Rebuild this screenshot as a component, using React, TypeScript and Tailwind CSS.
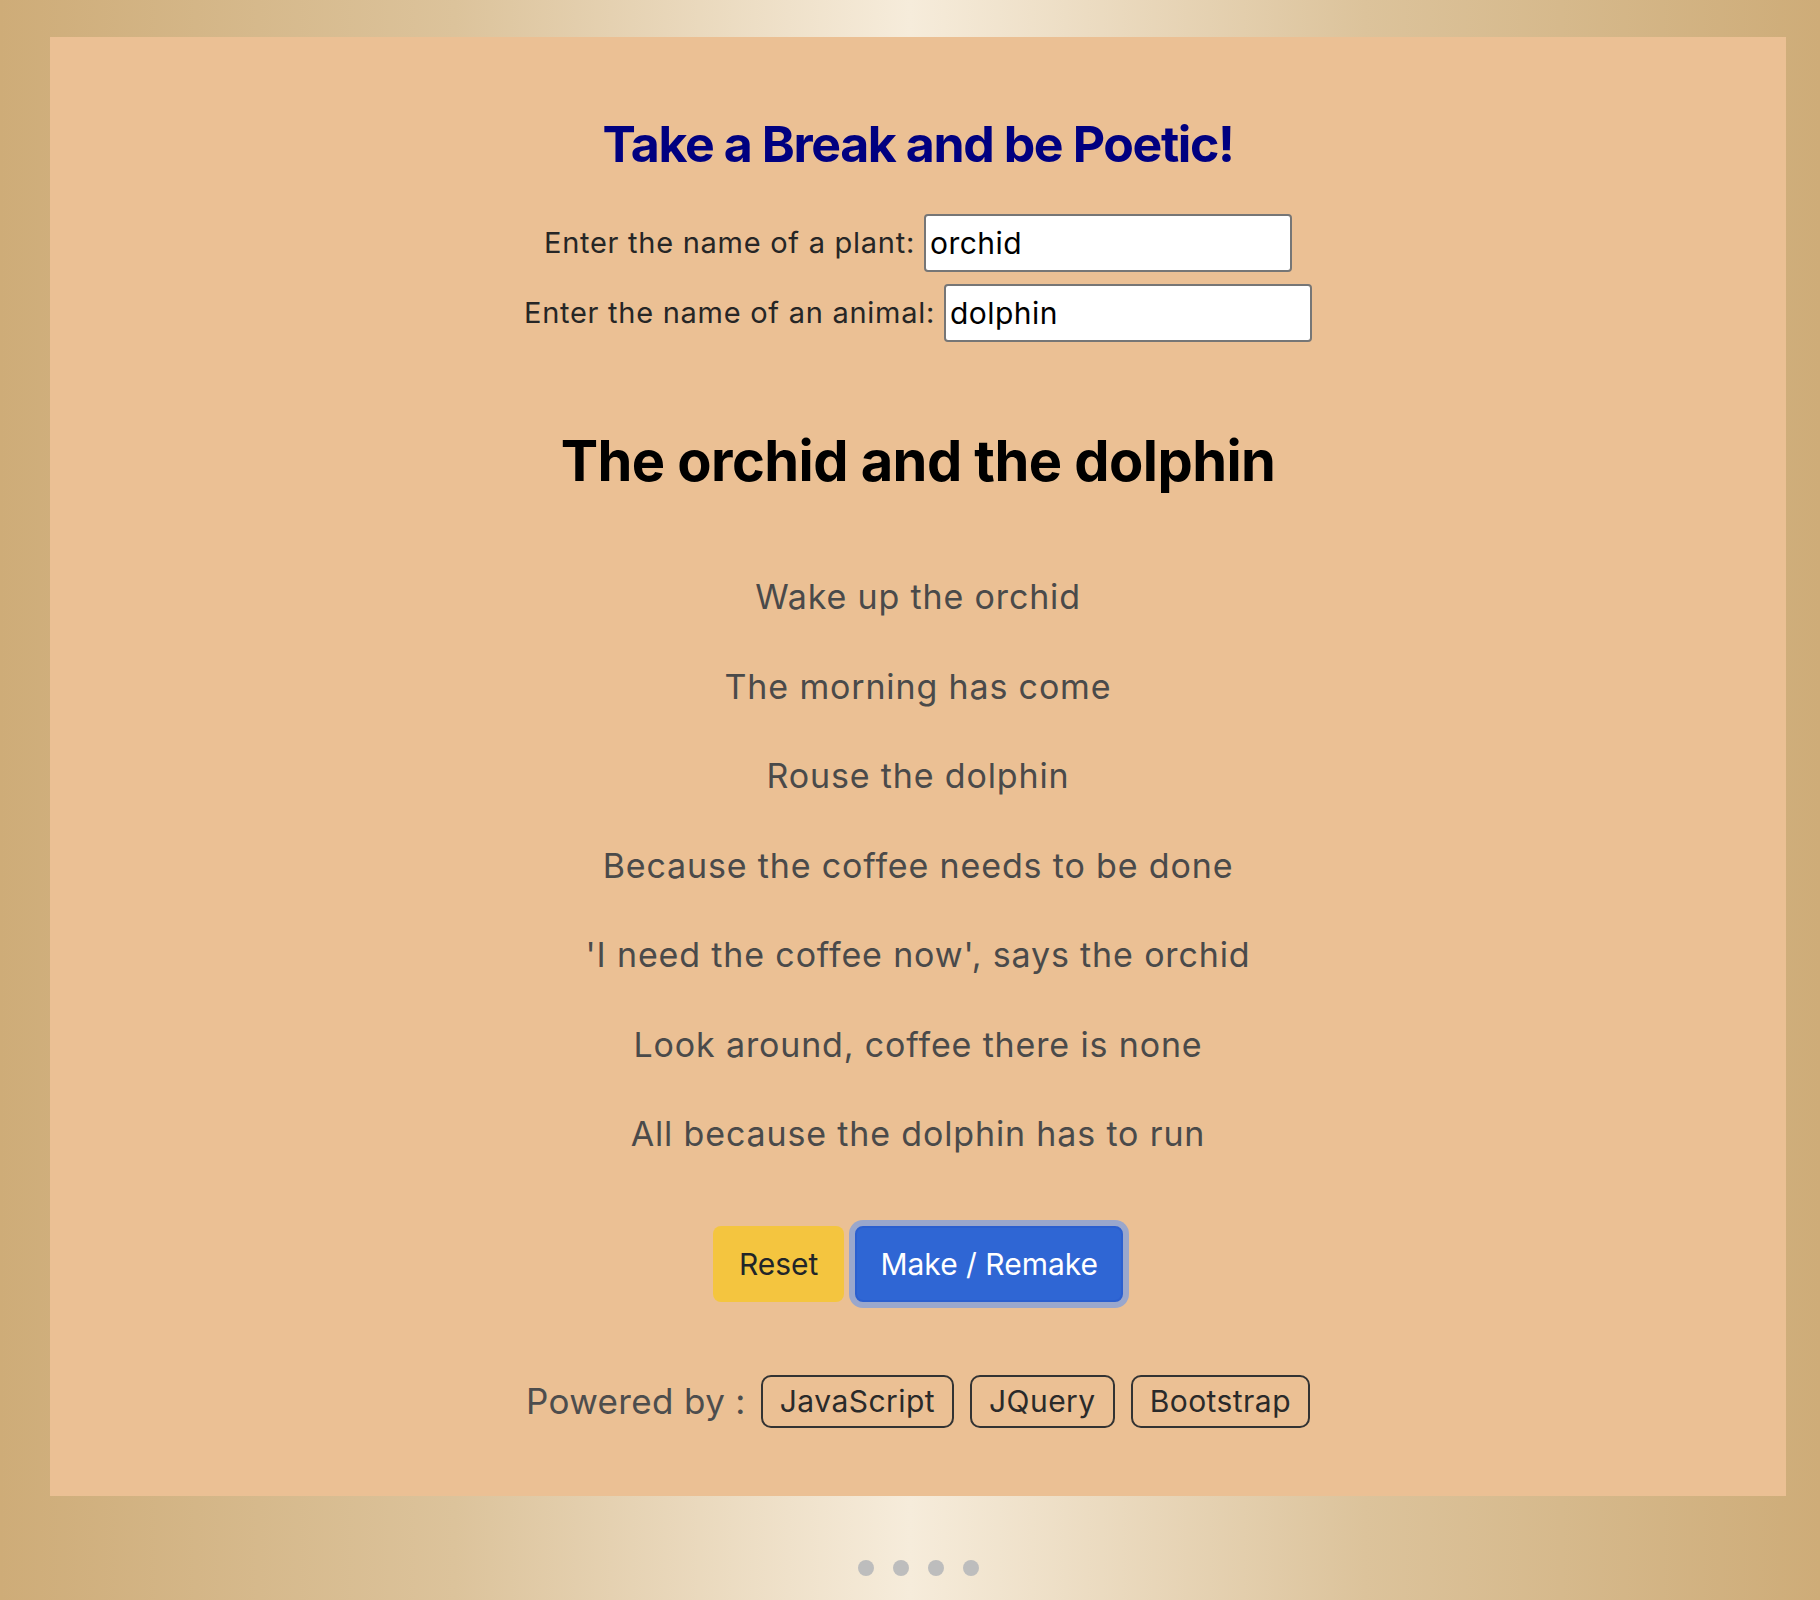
import React from "react";

const poem = [
  "Wake up the orchid",
  "The morning has come",
  "Rouse the dolphin",
  "Because the coffee needs to be done",
  "'I need the coffee now', says the orchid",
  "Look around, coffee there is none",
  "All because the dolphin has to run",
];

export default function App() {
  return (
    <div
      className="min-h-[1600px] w-full bg-[linear-gradient(to_right,#ceac78_0%,#dcc39b_25%,#f6ecdb_50%,#dcc39b_75%,#ceac78_100%)] pt-[37px]"
      style={{ fontFamily: "Inter, 'Noto Sans', sans-serif" }}
    >
      <div className="ml-[50px] w-[1736px]">
        <div className="flex h-[1459px] flex-col items-center bg-[#ebc094] pt-[77px]">
          <h1 className="text-[50px] font-bold leading-[60px] tracking-[-0.028em] text-[#000080]">
            Take a Break and be Poetic!
          </h1>

          <div className="mt-[40px] flex flex-col items-center gap-[12px]">
            <div className="flex items-center gap-[9px]">
              <label className="text-[29px] leading-[34px] tracking-[0.025em] text-[#262626]">Enter the name of a plant:</label>
              <input
                readOnly
                value="orchid"
                className="h-[58px] w-[368px] rounded-[4px] border-2 border-[#767676] bg-white pl-[4px] text-[30px] tracking-[0.015em] text-black outline-none"
              />
            </div>
            <div className="flex items-center gap-[9px]">
              <label className="text-[29px] leading-[34px] tracking-[0.025em] text-[#262626]">Enter the name of an animal:</label>
              <input
                readOnly
                value="dolphin"
                className="h-[58px] w-[368px] rounded-[4px] border-2 border-[#767676] bg-white pl-[4px] text-[30px] tracking-[0.015em] text-black outline-none"
              />
            </div>
          </div>

          <h2 className="mt-[86px] text-[56px] font-bold leading-[67px] tracking-[-0.01em] text-black">
            The orchid and the dolphin
          </h2>

          <div className="mt-[82px] flex flex-col items-center gap-[49.5px]">
            {poem.map((l) => (
              <p key={l} className="text-[34px] leading-[40px] tracking-[0.025em] text-[#4a4a4a]">
                {l}
              </p>
            ))}
          </div>

          <div className="mt-[72px] flex items-center gap-[11px]">
            <button className="h-[76px] rounded-[8px] bg-[#f4c53f] px-[26px] text-[30px] text-[#212529]">
              Reset
            </button>
            <button className="h-[76px] rounded-[8px] border-2 border-[#2b5fcf] bg-[#2f66d4] px-[23px] text-[30px] text-white ring-[6px] ring-[#9aa7cc]">
              Make / Remake
            </button>
          </div>

          <div className="mt-[73px] flex items-center">
            <span className="mr-[15px] text-[35px] tracking-[0.01em] text-[#4d4d4d]">Powered by :</span>
            <div className="flex items-center gap-[16px]">
              {["JavaScript", "JQuery", "Bootstrap"].map((b) => (
                <span
                  key={b}
                  className="flex h-[53px] items-center rounded-[10px] border-2 border-[#333333] px-[17px] text-[30px] tracking-[0.015em] text-[#2a2a2a]"
                >
                  {b}
                </span>
              ))}
            </div>
          </div>
        </div>

        <div className="mt-[64px] flex items-center justify-center gap-[19px]">
          <span className="h-[16px] w-[16px] rounded-full bg-[#bdbdbd]" />
          <span className="h-[16px] w-[16px] rounded-full bg-[#bdbdbd]" />
          <span className="h-[16px] w-[16px] rounded-full bg-[#bdbdbd]" />
          <span className="h-[16px] w-[16px] rounded-full bg-[#bdbdbd]" />
        </div>
      </div>
    </div>
  );
}
